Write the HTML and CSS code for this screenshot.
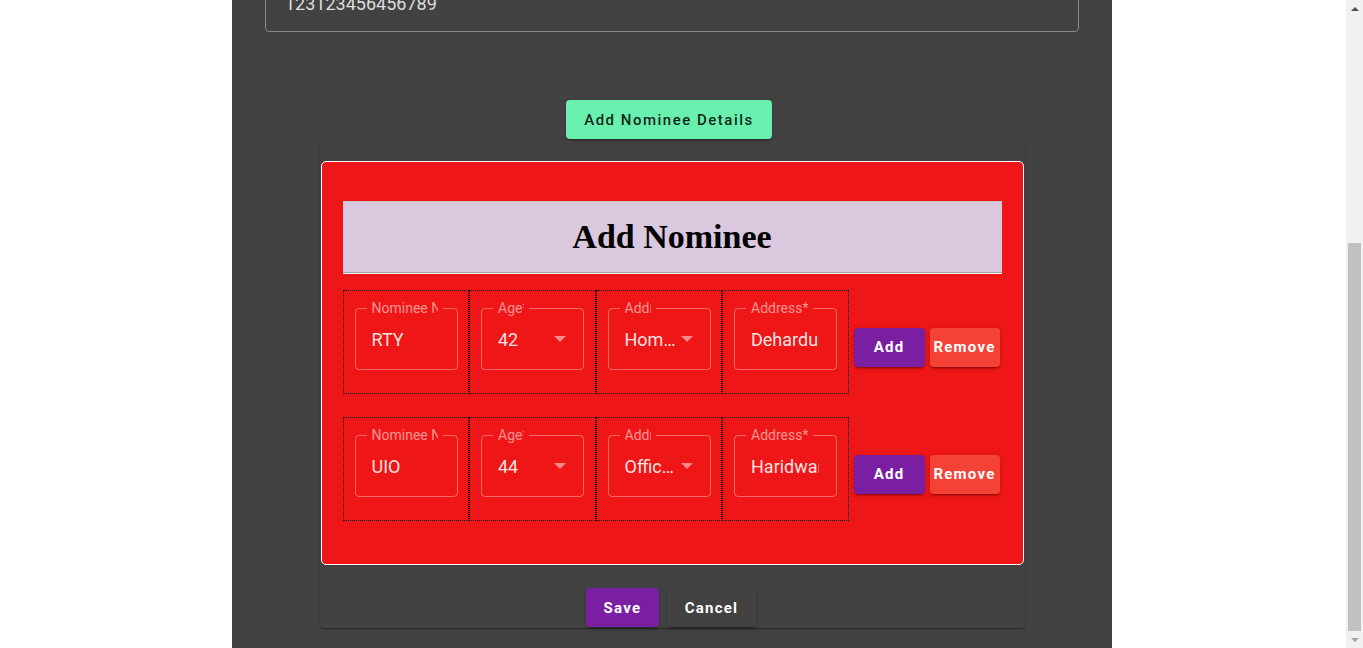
FILE: index.html
```html
<!DOCTYPE html>
<html lang="en">
<head>
<meta charset="utf-8">
<title>Add Nominee</title>
<link rel="stylesheet" href="styles.css">
</head>
<body>
<main class="panel">
  <fieldset class="outlined"><legend class="dlabel">Account Number*</legend><div class="dvalue">123123456456789</div></fieldset>

  <div class="nominee-toggle">
    <button class="btn-green" type="button">Add Nominee Details</button>
  </div>

  <section class="card">
    <div class="nominee-box">
      <h1 class="nominee-title">Add Nominee</h1>

      <div class="nominee-row">
        <div class="cell">
          <fieldset class="nfield"><legend class="nlabel"><span class="ltext">Nominee Name*</span></legend>
            <div class="ninner text"><span class="nvalue">RTY</span></div>
          </fieldset>
        </div>
        <div class="cell">
          <fieldset class="nfield"><legend class="nlabel short"><span class="ltext">Age*</span></legend>
            <div class="ninner"><span class="nvalue ellipsis">42</span><svg class="arrow" viewBox="0 0 12 6"><path d="M0 0h12L6 6z" fill="currentColor"/></svg></div>
          </fieldset>
        </div>
        <div class="cell">
          <fieldset class="nfield"><legend class="nlabel short"><span class="ltext">Address Type*</span></legend>
            <div class="ninner"><span class="nvalue ellipsis">Home Address</span><svg class="arrow" viewBox="0 0 12 6"><path d="M0 0h12L6 6z" fill="currentColor"/></svg></div>
          </fieldset>
        </div>
        <div class="cell">
          <fieldset class="nfield"><legend class="nlabel"><span class="ltext">Address*</span></legend>
            <div class="ninner text"><span class="nvalue">Dehardun</span></div>
          </fieldset>
        </div>
        <button class="btn btn-purple btn-add row-btn" type="button">Add</button>
        <button class="btn btn-red btn-remove row-btn" type="button">Remove</button>
      </div>

      <div class="nominee-row">
        <div class="cell">
          <fieldset class="nfield"><legend class="nlabel"><span class="ltext">Nominee Name*</span></legend>
            <div class="ninner text"><span class="nvalue">UIO</span></div>
          </fieldset>
        </div>
        <div class="cell">
          <fieldset class="nfield"><legend class="nlabel short"><span class="ltext">Age*</span></legend>
            <div class="ninner"><span class="nvalue ellipsis">44</span><svg class="arrow" viewBox="0 0 12 6"><path d="M0 0h12L6 6z" fill="currentColor"/></svg></div>
          </fieldset>
        </div>
        <div class="cell">
          <fieldset class="nfield"><legend class="nlabel short"><span class="ltext">Address Type*</span></legend>
            <div class="ninner"><span class="nvalue ellipsis">Office Address</span><svg class="arrow" viewBox="0 0 12 6"><path d="M0 0h12L6 6z" fill="currentColor"/></svg></div>
          </fieldset>
        </div>
        <div class="cell">
          <fieldset class="nfield"><legend class="nlabel"><span class="ltext">Address*</span></legend>
            <div class="ninner text"><span class="nvalue">Haridwar</span></div>
          </fieldset>
        </div>
        <button class="btn btn-purple btn-add row-btn" type="button">Add</button>
        <button class="btn btn-red btn-remove row-btn" type="button">Remove</button>
      </div>
    </div>

    <div class="actions">
      <button class="btn btn-purple btn-save" type="button">Save</button>
      <button class="btn btn-dark btn-cancel" type="button">Cancel</button>
    </div>
  </section>
</main>

<div class="scrollbar" aria-hidden="true">
  <div class="sb-btn"><span class="sb-arrow up"></span></div>
  <div class="sb-track"><div class="sb-thumb"></div></div>
  <div class="sb-btn"><span class="sb-arrow down"></span></div>
</div>

<script src="script.js"></script>
</body>
</html>
```

FILE: styles.css
```css
* { box-sizing: border-box; }

html, body {
  margin: 0;
  padding: 0;
}

body {
  background: #ffffff;
  padding-right: 19px;
  font-family: Roboto, "Noto Sans", "Liberation Sans", Arial, sans-serif;
}

.panel {
  width: 880px;
  margin: 0 auto;
  background: #424242;
  padding: 0 33px 20px;
}

/* upper form field (dark outlined) */
.outlined {
  margin: 0;
  min-width: 0;
  padding: 0 11px 7px;
  border: 1px solid #8a8a8a;
  border-radius: 4px;
}

.dlabel {
  padding: 0 5px;
  font-size: 14px;
  line-height: 16px;
  color: rgba(255, 255, 255, 0.7);
}

.dvalue {
  height: 40px;
  line-height: 40px;
  padding-left: 8px;
  font-size: 18px;
  color: #dddddd;
  white-space: nowrap;
  overflow: hidden;
}

/* green toggle button */
.nominee-toggle {
  display: flex;
  justify-content: center;
  margin-top: 68px;
  padding-right: 6px;
}

.btn-green {
  height: 39px;
  padding: 0 18px;
  border: 0;
  border-radius: 4px;
  background: #69f0ae;
  color: rgba(0, 0, 0, 0.87);
  font-family: Roboto, "Noto Sans", Arial, sans-serif;
  font-size: 15px;
  font-weight: 500;
  letter-spacing: 1.5px;
  box-shadow: 0 3px 1px -2px rgba(0,0,0,.2), 0 2px 2px 0 rgba(0,0,0,.14), 0 1px 5px 0 rgba(0,0,0,.12);
}

/* card */
.card {
  width: 705px;
  margin: 0 auto;
  padding: 22px 1px 1px;
  background: #424242;
  border-radius: 4px;
  box-shadow: 0 2px 1px -1px rgba(0,0,0,.2), 0 1px 1px 0 rgba(0,0,0,.14), 0 1px 3px 0 rgba(0,0,0,.12);
}

.nominee-box {
  background: #ee1616;
  border: 1px solid #ffffff;
  border-radius: 5px;
  padding: 39px 21px 43px;
}

.nominee-title {
  margin: 0;
  height: 72px;
  background: #dac8df;
  border-top: 1px solid #c6c6c6;
  border-bottom: 1px solid #a0a0a0;
  box-shadow: 0 1px 0 #ffffff;
  font-family: "Liberation Serif", "Times New Roman", serif;
  font-size: 34px;
  font-weight: 700;
  line-height: 70px;
  color: #000000;
  text-align: center;
}

.nominee-row {
  display: flex;
  align-items: center;
  margin-top: 17px;
}

.nominee-row + .nominee-row {
  margin-top: 23px;
}

.cell {
  flex: none;
  width: 126.5px;
  border: 1px dotted #000000;
  padding: 9px 10.5px 23px 11px;
}

.nfield {
  margin: 0;
  min-width: 0;
  width: 103px;
  padding: 0 11px 7px;
  border: 1px solid rgba(255, 255, 255, 0.35);
  border-radius: 4px;
}

.nlabel {
  padding: 0 5px;
  font-size: 14px;
  line-height: 16px;
  color: rgba(255, 255, 255, 0.55);
}

.ltext {
  display: block;
  max-width: 66px;
  overflow: hidden;
  white-space: nowrap;
}

.nlabel.short .ltext {
  max-width: 26px;
}

.ninner {
  display: flex;
  align-items: center;
  height: 46px;
  padding: 0 5px;
  font-size: 18px;
  color: rgba(255, 255, 255, 0.9);
}

.ninner.text {
  padding-right: 6px;
}

.nvalue {
  flex: 1;
  min-width: 0;
  overflow: hidden;
  white-space: nowrap;
}

.nvalue.ellipsis {
  text-overflow: ellipsis;
}

.arrow {
  flex: none;
  width: 12px;
  height: 6px;
  margin-right: 1px;
  color: rgba(255, 255, 255, 0.5);
}

/* buttons */
.btn {
  height: 39px;
  padding: 0;
  border: 0;
  border-radius: 4px;
  font-family: Roboto, "Noto Sans", Arial, sans-serif;
  font-size: 15px;
  font-weight: 700;
  letter-spacing: 1.25px;
  color: #ffffff;
  box-shadow: 0 3px 1px -2px rgba(0,0,0,.2), 0 2px 2px 0 rgba(0,0,0,.14), 0 1px 5px 0 rgba(0,0,0,.12);
}

.btn-purple { background: #7b1fa2; }
.btn-red { background: #f44336; }
.btn-dark { background: #424242; }

.row-btn {
  flex: none;
  margin-top: 10px;
  margin-left: 5px;
}

.btn-add { width: 71px; }
.btn-remove { width: 70px; }
.btn-save { width: 73px; }
.btn-cancel { width: 89px; }

.actions {
  display: flex;
  justify-content: center;
  gap: 8px;
  margin-top: 23px;
  padding-right: 2px;
}

/* window scrollbar (drawn, scrolled to the bottom) */
.scrollbar {
  position: fixed;
  top: 0;
  right: 0;
  width: 17px;
  height: 100vh;
  background: #f1f1f1;
  display: flex;
  flex-direction: column;
}

.sb-btn {
  flex: none;
  height: 17px;
  display: flex;
  align-items: center;
  justify-content: center;
}

.sb-arrow {
  width: 0;
  height: 0;
  border-left: 4px solid transparent;
  border-right: 4px solid transparent;
}

.sb-arrow.up {
  border-bottom: 4px solid #505050;
}

.sb-arrow.down {
  border-top: 4px solid #a3a3a3;
}

.sb-track {
  flex: 1;
  display: flex;
  flex-direction: column;
  justify-content: flex-end;
  padding: 0 2px;
}

.sb-thumb {
  height: 388px;
  background: #c1c1c1;
}
```

FILE: script.js
```js
function scrollToBottom() {
  window.scrollTo(0, document.documentElement.scrollHeight);
}
scrollToBottom();
window.addEventListener('load', scrollToBottom);
```
